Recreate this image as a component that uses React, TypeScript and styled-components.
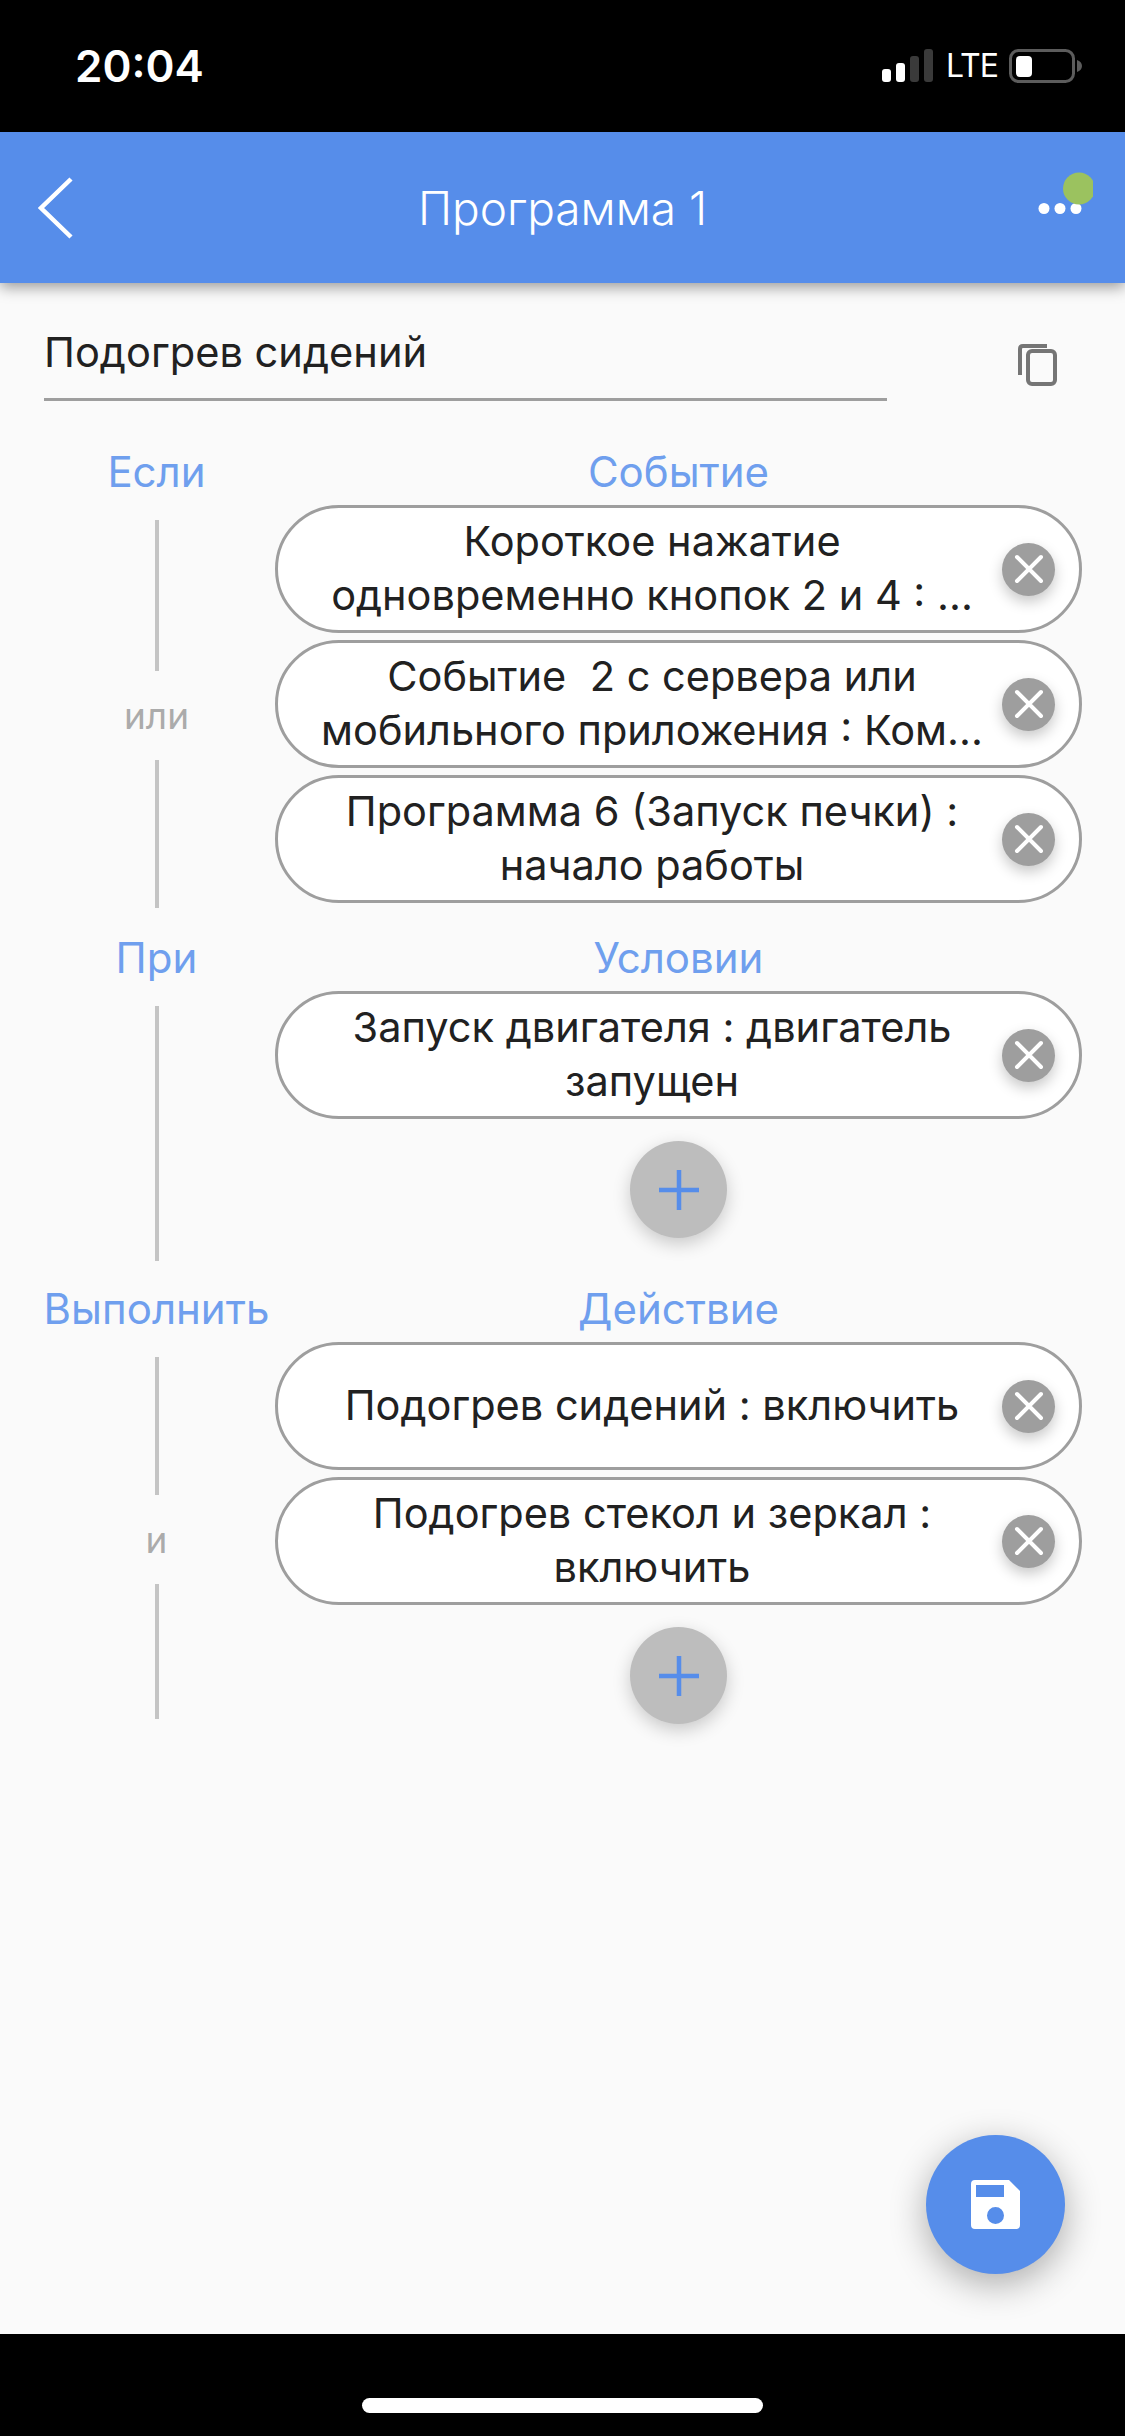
import React from "react";
import styled, { createGlobalStyle } from "styled-components";

const GlobalStyle = createGlobalStyle`
  html, body {
    margin: 0;
    padding: 0;
    background: #000;
  }
  * {
    box-sizing: border-box;
  }
`;

const FONT = `Inter, "Noto Sans", sans-serif`;
const BLUE = "#568dea";

const Screen = styled.div`
  width: 1125px;
  height: 2436px;
  display: flex;
  flex-direction: column;
  font-family: ${FONT};
  overflow: hidden;
`;

const StatusBar = styled.div`
  height: 132px;
  flex: none;
  background: #000;
  color: #fff;
  display: flex;
  align-items: center;
  justify-content: space-between;
  padding: 0 43px 1px 75px;
`;

const Time = styled.div`
  font-size: 44px;
  font-weight: 600;
`;

const StatusIcons = styled.div`
  display: flex;
  align-items: center;
  gap: 12px;
`;

const Lte = styled.div`
  width: 51px;
  font-size: 32px;
  font-weight: 400;
  letter-spacing: -1px;
  white-space: nowrap;
`;

const Header = styled.header`
  position: relative;
  z-index: 1;
  height: 151px;
  flex: none;
  background: ${BLUE};
  box-shadow: 0 4px 14px rgba(0, 0, 0, 0.4);
  display: flex;
  align-items: center;
  justify-content: space-between;
  padding: 0 32px 0 38px;
`;

const HeaderTitle = styled.div`
  position: absolute;
  left: 0;
  right: 0;
  text-align: center;
  color: #fff;
  font-size: 46px;
  font-weight: 300;
`;

const Content = styled.main`
  position: relative;
  flex: 1;
  background: #fafafa;
  padding-top: 44px;
`;

const TitleRow = styled.div`
  display: flex;
  align-items: flex-start;
  padding: 0 67px 0 44px;
  justify-content: space-between;
  height: 112px;
`;

const TitleField = styled.div`
  width: 843px;
  height: 74px;
  border-bottom: 3px solid #9e9e9e;
  font-size: 41.6px;
  line-height: 50px;
  color: #212121;
`;

const CopyButton = styled.div`
  margin-top: 15px;
  display: flex;
`;

const Section = styled.section`
  display: grid;
  grid-template-columns: 237px 1fr;
  padding: 0 43px 0 38px;
`;

const Label = styled.div`
  height: 66px;
  padding-bottom: 2px;
  display: flex;
  align-items: center;
  justify-content: center;
  font-size: 42px;
  color: #6f9fee;
  white-space: nowrap;
`;

const Rail = styled.div<{ $height: number }>`
  height: ${(p) => p.$height}px;
  margin-top: 15px;
  display: flex;
  flex-direction: column;
  align-items: center;
`;

const RailLine = styled.div`
  flex: 1 0 0;
  width: 4px;
  background: #c4c4c4;
  &:first-child {
    flex-basis: 3px;
  }
`;

const Connector = styled.div`
  height: 89px;
  flex: none;
  display: flex;
  align-items: center;
  justify-content: center;
  font-size: 37px;
  color: #ababab;
`;

const Stack = styled.div<{ $after: number }>`
  display: flex;
  flex-direction: column;
  align-items: center;
  gap: 7px;
  padding-bottom: ${(p) => p.$after}px;
`;

const Pill = styled.div`
  position: relative;
  width: 100%;
  height: 128px;
  border: 3px solid #9e9e9e;
  border-radius: 64px;
  background: #fff;
  display: flex;
  align-items: center;
  justify-content: center;
  padding: 0 53px 2px 0;
`;

const PillText = styled.div`
  text-align: center;
  white-space: pre-wrap;
  font-size: 41.5px;
  line-height: 54px;
  color: #212121;
`;

const CloseButton = styled.div`
  position: absolute;
  right: 24px;
  top: 50%;
  width: 53px;
  height: 53px;
  margin-top: -26.5px;
  border-radius: 50%;
  background: #9e9e9e;
  box-shadow: 0 6px 14px rgba(0, 0, 0, 0.22);
  display: flex;
  align-items: center;
  justify-content: center;
`;

const AddButton = styled.div`
  width: 97px;
  height: 97px;
  margin-top: 15px;
  border-radius: 50%;
  background: #bdbdbd;
  box-shadow: 0 6px 18px rgba(0, 0, 0, 0.2);
  display: flex;
  align-items: center;
  justify-content: center;
`;

const SaveButton = styled.div`
  position: absolute;
  left: 926px;
  top: 1852px;
  width: 139px;
  height: 139px;
  border-radius: 50%;
  background: ${BLUE};
  box-shadow: 0 10px 36px rgba(0, 0, 0, 0.32);
  display: flex;
  align-items: center;
  justify-content: center;
`;

const BottomBar = styled.div`
  height: 102px;
  flex: none;
  background: #000;
  display: flex;
  justify-content: center;
  padding-top: 64px;
`;

const HomeIndicator = styled.div`
  width: 401px;
  height: 15px;
  border-radius: 8px;
  background: #fff;
`;

const SignalIcon = () => (
  <svg width="52" height="33" viewBox="0 0 52 33">
    <rect x="0" y="20" width="9" height="13" rx="3" fill="#fff" />
    <rect x="14" y="14" width="9" height="19" rx="3" fill="#fff" />
    <rect x="28" y="7" width="9" height="26" rx="3" fill="#3a3a3a" />
    <rect x="42" y="0" width="9" height="33" rx="3" fill="#3a3a3a" />
  </svg>
);

const BatteryIcon = () => (
  <svg width="73" height="34" viewBox="0 0 73 34">
    <rect x="1.5" y="1.5" width="63" height="31" rx="8" fill="none" stroke="#5c5c5c" strokeWidth="3" />
    <rect x="7" y="7" width="16" height="21" rx="4" fill="#fff" />
    <path d="M68 11 C71 12 73 14 73 17 C73 20 71 22 68 23 Z" fill="#5c5c5c" />
  </svg>
);

const BackIcon = () => (
  <svg width="36" height="62" viewBox="0 0 36 62">
    <path d="M33 2 L3 31 L33 60" fill="none" stroke="#fff" strokeWidth="4.5" />
  </svg>
);

const MoreIcon = () => (
  <svg width="56" height="72" viewBox="0 0 56 72">
    <circle cx="7" cy="36.5" r="5.5" fill="#fff" />
    <circle cx="23" cy="36.5" r="5.5" fill="#fff" />
    <circle cx="39" cy="36.5" r="5.5" fill="#fff" />
    <circle cx="42" cy="16.5" r="16" fill="#9bc25f" />
  </svg>
);

const CopyIcon = () => (
  <svg width="40" height="45" viewBox="0 0 40 45" fill="none" stroke="#757575" strokeWidth="4">
    <path d="M29 4 H5 Q2 4 2 7 V33" />
    <rect x="10" y="9" width="27" height="33" rx="4" />
  </svg>
);

const CloseIcon = () => (
  <svg width="30" height="30" viewBox="0 0 30 30">
    <path d="M3 3 L27 27 M27 3 L3 27" stroke="#fff" strokeWidth="4" strokeLinecap="round" />
  </svg>
);

const PlusIcon = () => (
  <svg width="40" height="40" viewBox="0 0 40 40">
    <path d="M20 0 V40 M0 20 H40" stroke={BLUE} strokeWidth="4.5" />
  </svg>
);

const SaveIcon = () => (
  <svg width="49" height="49" viewBox="0 0 49 49">
    <path
      fillRule="evenodd"
      fill="#fff"
      d="M4 0 H38 L49 11 V45 Q49 49 45 49 H4 Q0 49 0 45 V4 Q0 0 4 0 Z M5 5 V17 H33 V5 Z M24.5 27 A8.5 8.5 0 1 0 24.5 44 A8.5 8.5 0 1 0 24.5 27 Z"
    />
  </svg>
);

type SectionData = {
  label: string;
  title: string;
  railHeight: number;
  connector?: string;
  after: number;
  add: boolean;
  items: string[];
};

const sections: SectionData[] = [
  {
    label: "Если",
    title: "Событие",
    railHeight: 388,
    connector: "или",
    after: 22,
    add: false,
    items: [
      "Короткое нажатие\nодновременно кнопок 2 и 4 : ...",
      "Событие  2 с сервера или\nмобильного приложения : Ком...",
      "Программа 6 (Запуск печки) :\nначало работы",
    ],
  },
  {
    label: "При",
    title: "Условии",
    railHeight: 255,
    after: 38,
    add: true,
    items: ["Запуск двигателя : двигатель\nзапущен"],
  },
  {
    label: "Выполнить",
    title: "Действие",
    railHeight: 362,
    connector: "и",
    after: 0,
    add: true,
    items: ["Подогрев сидений : включить", "Подогрев стекол и зеркал :\nвключить"],
  },
];

const App = () => {
  return (
    <Screen>
      <GlobalStyle />
      <StatusBar>
        <Time>20:04</Time>
        <StatusIcons>
          <SignalIcon />
          <Lte>LTE</Lte>
          <BatteryIcon />
        </StatusIcons>
      </StatusBar>

      <Header>
        <BackIcon />
        <HeaderTitle>Программа 1</HeaderTitle>
        <MoreIcon />
      </Header>

      <Content>
        <TitleRow>
          <TitleField>Подогрев сидений</TitleField>
          <CopyButton>
            <CopyIcon />
          </CopyButton>
        </TitleRow>

        {sections.map((s) => (
          <Section key={s.label}>
            <Label>{s.label}</Label>
            <Label>{s.title}</Label>
            <Rail $height={s.railHeight}>
              <RailLine />
              {s.connector && <Connector>{s.connector}</Connector>}
              {s.connector && <RailLine />}
            </Rail>
            <Stack $after={s.after}>
              {s.items.map((item) => (
                <Pill key={item}>
                  <PillText>{item}</PillText>
                  <CloseButton>
                    <CloseIcon />
                  </CloseButton>
                </Pill>
              ))}
              {s.add && (
                <AddButton>
                  <PlusIcon />
                </AddButton>
              )}
            </Stack>
          </Section>
        ))}

        <SaveButton>
          <SaveIcon />
        </SaveButton>
      </Content>

      <BottomBar>
        <HomeIndicator />
      </BottomBar>
    </Screen>
  );
};

export default App;
